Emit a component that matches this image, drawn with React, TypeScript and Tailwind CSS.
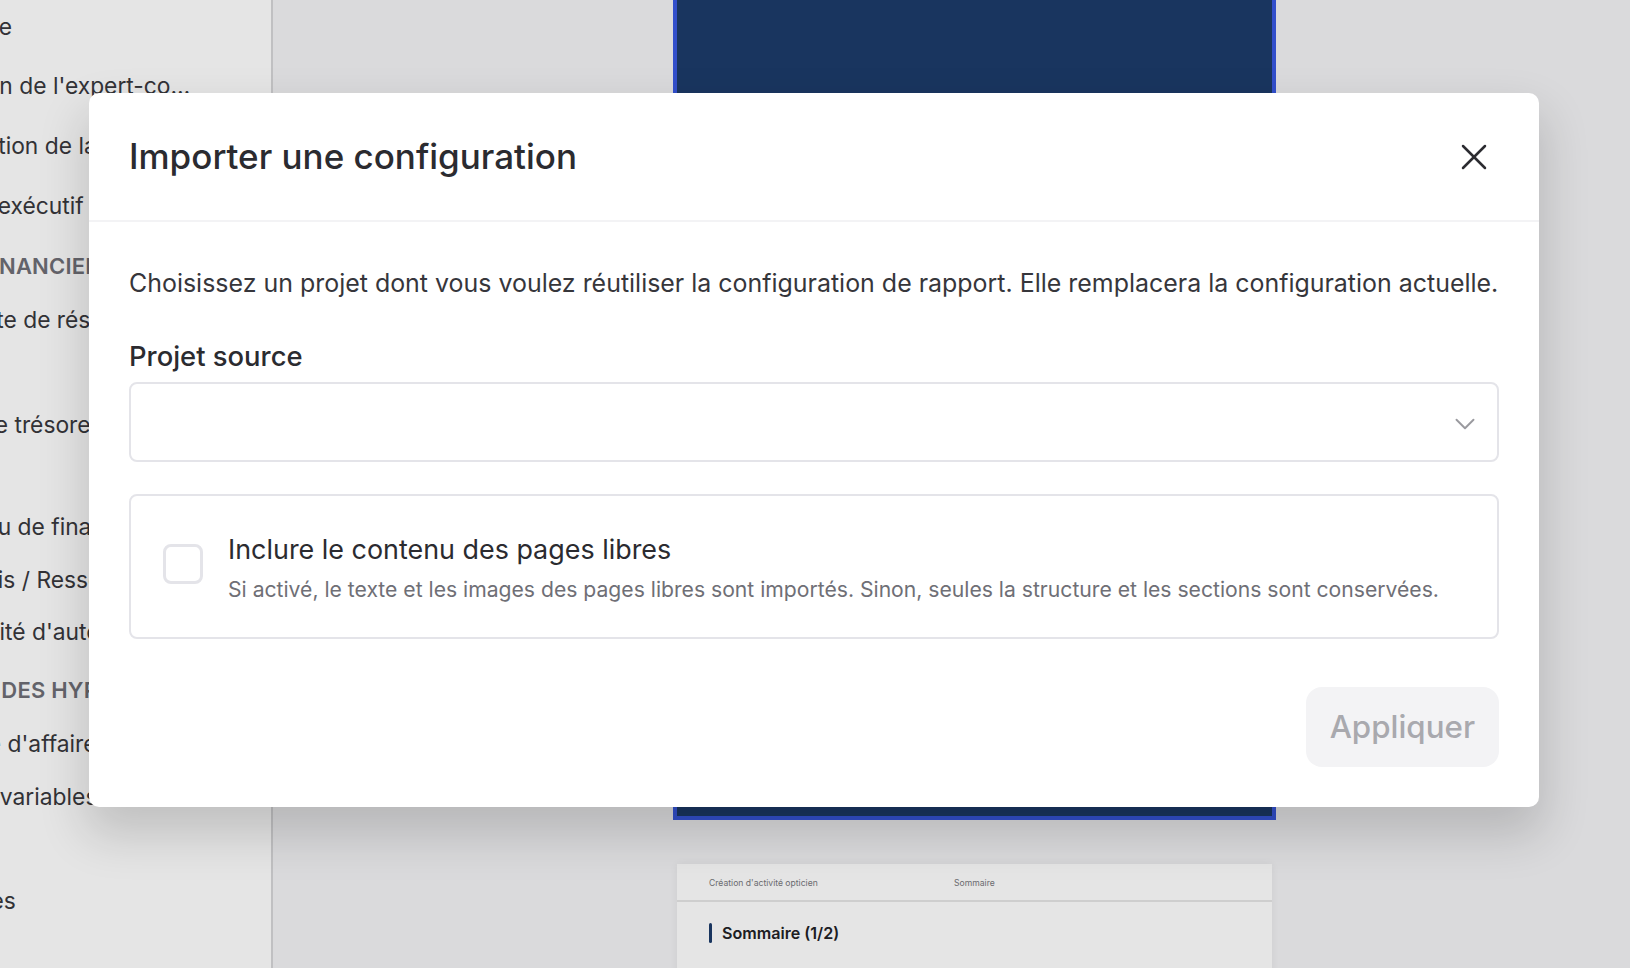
import { ChevronDown, X } from 'lucide-react';

interface NavRow {
  label: string;
  // left shift, the sidebar is scrolled sideways in the screenshot
  shift: string;
  gap: string;
  section?: boolean;
}

const navRows: NavRow[] = [
  { label: 'Sommaire', shift: '-ml-[96px]', gap: 'mt-[12px]' },
  { label: "Mission de l'expert-co…", shift: '-ml-[70px]', gap: 'mt-[29px]' },
  { label: 'Présentation de la société', shift: '-ml-[97px]', gap: 'mt-[30px]' },
  { label: 'Résumé exécutif', shift: '-ml-[95px]', gap: 'mt-[30px]' },
  { label: 'PRÉVISIONNEL FINANCIER', shift: '-ml-[189px]', gap: 'mt-[30px]', section: true },
  { label: 'Compte de résultat', shift: '-ml-[68px]', gap: 'mt-[24px]' },
  { label: 'Plan de trésorerie', shift: '-ml-[72px]', gap: 'mt-[75px]' },
  { label: 'Tableau de financement', shift: '-ml-[74px]', gap: 'mt-[72px]' },
  { label: 'Emplois / Ressources', shift: '-ml-[69px]', gap: 'mt-[23px]' },
  { label: "Capacité d'autofinancement", shift: '-ml-[70px]', gap: 'mt-[22px]' },
  { label: 'DÉTAIL DES HYPOTHÈSES', shift: '-ml-[82px]', gap: 'mt-[28px]', section: true },
  { label: "Chiffre d'affaires", shift: '-ml-[72px]', gap: 'mt-[24px]' },
  { label: 'Charges variables', shift: '-ml-[97px]', gap: 'mt-[23px]' },
  { label: 'Annexes', shift: '-ml-[77px]', gap: 'mt-[74px]' },
];

function Sidebar() {
  return (
    <aside className="h-full w-[273px] shrink-0 overflow-hidden border-r-2 border-[#d6d6d8] bg-white">
      {navRows.map((row) => (
        <div
          key={row.label}
          className={`${row.gap} ${row.shift} h-[30px] whitespace-nowrap leading-[30px] ${
            row.section ? 'text-[22px] font-semibold tracking-[0.2px] text-[#6f6f76]' : 'text-[22.8px] text-[#38383d]'
          }`}
        >
          {row.label}
        </div>
      ))}
    </aside>
  );
}

function PagePreview() {
  return (
    <main className="h-full flex-1 overflow-hidden bg-[#f3f3f5] pl-[400px]">
      {/* Selected cover page */}
      <div className="h-[820px] w-[603px] border-x-4 border-b-4 border-[#3859e3] bg-[#1c3b6a]" />

      {/* Next page */}
      <div className="mt-[44px] ml-[4px] h-[200px] w-[595px] bg-white shadow-[0_0_8px_rgba(0,0,0,0.06)]">
        <div className="flex h-[38px] items-center border-b-2 border-[#e6e6e6] pl-[32px] pt-[3px] text-[8.6px] text-[#77777c]">
          <span className="w-[245px]">Création d'activité opticien</span>
          <span>Sommaire</span>
        </div>
        <div className="mt-[19px] flex items-center gap-[10px] pl-[32px]">
          <span className="h-[20px] w-[3px] rounded-sm bg-[#1c3b6a]" />
          <span className="text-[16.1px] font-semibold text-[#222226]">Sommaire (1/2)</span>
        </div>
      </div>
    </main>
  );
}

function ImportDialog() {
  return (
    <div className="absolute left-[89px] top-[93px] h-[714px] w-[1450px] rounded-[10px] bg-white shadow-[0_24px_48px_4px_rgba(0,0,0,0.16)]">
      {/* Header */}
      <div className="flex h-[129px] items-center justify-between border-b-2 border-[#f3f3f5] px-[40px]">
        <h2 className="text-[35px] font-medium text-[#2b2b30]">Importer une configuration</h2>
        <X size={44} strokeWidth={1.35} className="mr-[3px] text-[#2b2b30]" />
      </div>

      {/* Body */}
      <div className="px-[40px] pt-[43px]">
        <p className="whitespace-nowrap text-[24.95px] leading-[36px] text-[#36363b]">
          Choisissez un projet dont vous voulez réutiliser la configuration de rapport. Elle remplacera la configuration actuelle.
        </p>

        <div className="mt-[37px] text-[27.4px] font-medium leading-[36px] text-[#2b2b30]">Projet source</div>

        <div className="mt-[8px] flex h-[80px] items-center justify-end rounded-[8px] border-2 border-[#e4e4e9] pr-[15px]">
          <ChevronDown size={34} strokeWidth={1.35} className="mt-[3px] text-[#9a9a9f]" />
        </div>

        <div className="mt-[32px] flex h-[145px] items-center rounded-[8px] border-2 border-[#e4e4e9] pl-[32px]">
          <div className="-mt-[5px] h-[40px] w-[40px] shrink-0 rounded-[8px] border-[3px] border-[#e4e4e9]" />
          <div className="ml-[25px] pt-[3px]">
            <div className="text-[26.9px] leading-[36px] text-[#2b2b30]">Inclure le contenu des pages libres</div>
            <div className="mt-[7px] text-[21.15px] leading-[32px] text-[#6f6f76]">
              Si activé, le texte et les images des pages libres sont importés. Sinon, seules la structure et les sections sont conservées.
            </div>
          </div>
        </div>

        <div className="mt-[48px] flex justify-end">
          <button className="h-[80px] rounded-[16px] bg-[#f3f3f5] px-[24px] text-[31.3px] font-medium text-[#a9a9ae]">
            Appliquer
          </button>
        </div>
      </div>
    </div>
  );
}

export default function App() {
  return (
    <div className="relative flex h-[968px] w-[1630px] overflow-hidden font-['Inter',sans-serif]">
      <Sidebar />
      <PagePreview />
      {/* Dim layer behind the dialog */}
      <div className="absolute inset-0 bg-black/10" />
      <ImportDialog />
    </div>
  );
}
